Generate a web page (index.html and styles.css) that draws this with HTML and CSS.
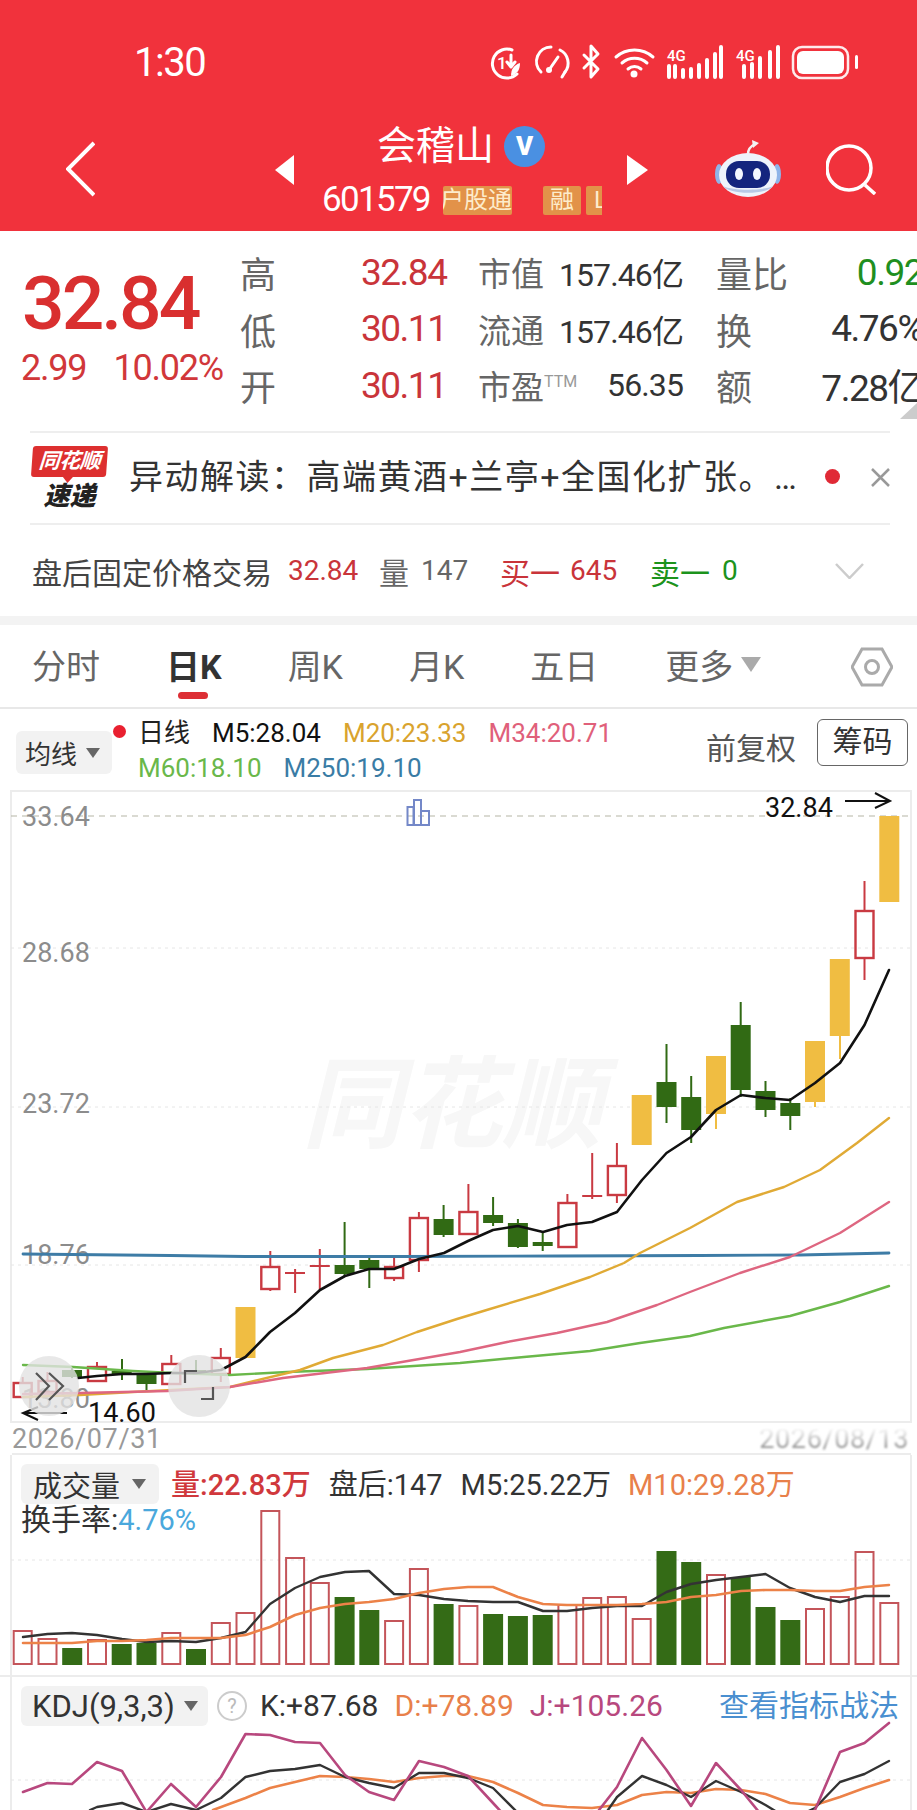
FILE: index.html
```html
<!DOCTYPE html>
<html lang="zh">
<head>
<meta charset="utf-8">
<title>会稽山</title>
<link rel="stylesheet" href="styles.css">
</head>
<body>
<div class="page">
  <header class="header">
    <div class="status">
      <span class="time">1:30</span>
      <svg class="status-icons" viewBox="490 44 370 36" width="370" height="36">
        <g class="si">
          <path d="M512 50a14.500 14.500 0 1 0 5 24"/>
          <path d="M511 76c0-7 3-11 9-13 0 7-3 11-9 13z" class="sif"/>
          <text x="497" y="69" class="si-t">1</text><path d="M511 55v11M507 62l4 5 4-5"/>
          <path d="M541 72a14.500 14.500 0 0 1 10-25M560 50a14.500 14.500 0 0 1 5 22"/>
          <path d="M549 70l9-13"/><circle cx="549" cy="70" r="3" class="sif"/><path d="M565 72l-3 5"/>
          <path d="M584 55l14 14-7 8V46l7 8-14 14" stroke-width="3"/>
          <path d="M616 57a28 28 0 0 1 37 0M622 63a19 19 0 0 1 25 0M628 69a10 10 0 0 1 13 0" stroke-width="3.500"/>
          <circle cx="634" cy="74" r="3.500" class="sif"/>
        </g>
        <text x="667" y="61" class="si-4g">4G</text>
        <g class="si-bars">
          <path d="M669 66v11M675 66v11M683 70v7M691 69v8M699 65v12M707 60v17M715 54v23M721 47v30"/>
        </g>
        <text x="736" y="61" class="si-4g">4G</text>
        <g class="si-bars">
          <path d="M744 66v11M752 64v13M760 58v19M770 52v25M778 47v30" stroke-width="4.500"/>
        </g>
        <rect x="793" y="47" width="55" height="31" rx="9" class="bat-o"/>
        <rect x="797" y="51" width="47" height="23" rx="6" class="bat-i"/>
        <rect x="855" y="55" width="3" height="14" rx="1.500" class="bat-i"/>
      </svg>
    </div>
    <nav class="nav">
      <svg class="back" viewBox="0 0 29 56" width="29" height="56"><path d="M28 2 2 28l26 26"/></svg>
      <span class="tri tri-l"></span>
      <div class="ident">
        <div class="ident-name">
          <span class="name">会稽山</span>
          <span class="vbadge">V</span>
        </div>
        <div class="ident-code">
          <span class="code">601579</span>
          <span class="tag tag-a"><span>户股通</span></span>
          <span class="tag tag-b">融</span>
          <span class="tag tag-c">L</span>
        </div>
      </div>
      <span class="tri tri-r"></span>
      <svg class="robot" viewBox="0 0 66 58" width="66" height="58">
        <path d="M33 14c0-5 3-8 7-10" class="ant"/><path d="M37 0l7 3-6 5z" fill="#f3f3f3"/>
        <ellipse cx="4" cy="34" rx="4" ry="10" fill="#8fb4e8"/><ellipse cx="62" cy="34" rx="4" ry="10" fill="#8fb4e8"/>
        <ellipse cx="33" cy="35" rx="29" ry="22" fill="#eef3fb"/>
        <path d="M8 46c6 9 44 9 50 0-10 5-40 5-50 0z" fill="#b8c9e6"/>
        <rect x="11" y="21" width="44" height="27" rx="13" fill="#14257e"/>
        <ellipse cx="24" cy="34" rx="4" ry="6" fill="#f4f7ff"/><ellipse cx="42" cy="34" rx="4" ry="6" fill="#f4f7ff"/>
      </svg>
      <svg class="search" viewBox="0 0 50 51" width="50" height="51"><circle cx="23" cy="24" r="22"/><path d="M39 41l10 9"/></svg>
    </nav>
  </header>

  <section class="quote">
    <div class="price-box">
      <div class="price">32.84</div>
      <div class="change"><span>2.99</span><span>10.02%</span></div>
    </div>
    <div class="stats">
      <span class="lab lab-big">高</span><span class="red">32.84</span>
      <span class="pair"><span class="lab">市值</span><span class="val">157.46亿</span></span>
      <span class="lab lab-big">量比</span><span class="val end grn">0.92</span>

      <span class="lab lab-big">低</span><span class="red">30.11</span>
      <span class="pair"><span class="lab">流通</span><span class="val">157.46亿</span></span>
      <span class="lab lab-big">换</span><span class="val end">4.76%</span>

      <span class="lab lab-big">开</span><span class="red">30.11</span>
      <span class="pair"><span class="lab">市盈<sup class="ttm">TTM</sup></span><span class="val">56.35</span></span>
      <span class="lab lab-big">额</span><span class="val end">7.28亿</span>
    </div>
    <span class="corner"></span>
  </section>

  <section class="promo">
    <div class="logo">
      <span class="logo-top">同花顺</span>
      <span class="logo-bot">速递</span>
    </div>
    <p class="promo-text">异动解读：高端黄酒+兰亭+全国化扩张。…</p>
    <span class="promo-dot"></span>
    <svg class="close" viewBox="0 0 19 19" width="19" height="19"><path d="M1 1l17 17M18 1 1 18"/></svg>
  </section>

  <section class="after">
    <span class="after-t">盘后固定价格交易</span>
    <span class="a-num a-red a1">32.84</span>
    <span class="a-gray a2">量</span>
    <span class="a-num a-gray a3">147</span>
    <span class="a-red a4">买一</span>
    <span class="a-num a-red a5">645</span>
    <span class="a-grn a6">卖一</span>
    <span class="a-num a-grn a7">0</span>
    <svg class="chev" viewBox="0 0 29 16" width="29" height="16"><path d="M1 1l13.500 14L28 1"/></svg>
  </section>

  <div class="band"></div>

  <section class="tabs">
    <span class="tab">分时</span>
    <span class="tab active">日K</span>
    <span class="tab">周K</span>
    <span class="tab">月K</span>
    <span class="tab">五日</span>
    <span class="tab tab-more">更多<i class="tab-tri"></i></span>
    <svg class="hex" viewBox="0 0 42 40" width="42" height="40"><path d="M11 2h20l10 18-10 18H11L1 20z"/><circle cx="21" cy="20" r="6.500"/></svg>
  </section>

  <section class="ma">
    <div class="chip chip-ma">均线<i class="chip-tri"></i></div>
    <span class="ma-dot"></span>
    <div class="ma-lines">
      <div class="ma-line"><span>日线</span><span class="m5">M5:28.04</span><span class="m20">M20:23.33</span><span class="m34">M34:20.71</span></div>
      <div class="ma-line"><span class="m60">M60:18.10</span><span class="m250">M250:19.10</span></div>
    </div>
    <span class="fq">前复权</span>
    <span class="chou">筹码</span>
  </section>

  <section class="panel panel-main">
    <svg class="plot" viewBox="0 790 917 633" width="917" height="633">
      <text x="302" y="1140" class="wm" textLength="300" lengthAdjust="spacingAndGlyphs">同花顺</text>
      <path d="M11 816H911" class="grid-top"/>
      <path d="M11 948H911M11 1107H911M11 1265H911" class="grid"/>
      <text x="22" y="826" class="ax">33.64</text>
      <text x="22" y="962" class="ax">28.68</text>
      <text x="22" y="1113" class="ax">23.72</text>
      <text x="22" y="1264" class="ax">18.76</text>
      <text x="22" y="1408" class="ax">13.80</text>

      <g class="c-y">
        <rect x="235.500" y="1307" width="20" height="51"/>
        <rect x="631.700" y="1095" width="20" height="50"/>
        <path d="M716 1114v15M815 1102v5M840 1036v23" class="w-y"/>
        <rect x="706" y="1056" width="20" height="58"/>
        <rect x="805" y="1041" width="20" height="61"/>
        <rect x="829.800" y="959" width="20" height="77"/>
        <rect x="879.300" y="816" width="20" height="86"/>
      </g>

      <g class="c-g">
        <path d="M72 1366v12M122 1359v21M146.500 1374v16M196 1360v12M344.600 1222v55M369.300 1257v31M443.600 1205v32M493.100 1197v29M517.900 1219v29M542.700 1232v19M666.500 1044v79M691.200 1076v67M740.700 1002v95M765.500 1081v36M790.300 1098v32" class="w-g"/>
        <rect x="62" y="1370" width="20" height="7"/>
        <rect x="111.700" y="1371" width="20" height="3"/>
        <rect x="136.500" y="1374" width="20" height="10"/>
        <rect x="186" y="1370" width="20" height="2"/>
        <rect x="334.600" y="1265" width="20" height="9"/>
        <rect x="359.300" y="1260" width="20" height="9"/>
        <rect x="433.600" y="1219" width="20" height="16"/>
        <rect x="483.100" y="1215" width="20" height="8"/>
        <rect x="507.900" y="1223" width="20" height="24"/>
        <rect x="532.700" y="1242" width="20" height="4"/>
        <rect x="656.500" y="1082" width="20" height="25"/>
        <rect x="681.200" y="1097" width="20" height="33"/>
        <rect x="730.700" y="1025" width="20" height="65"/>
        <rect x="755.500" y="1091" width="20" height="19"/>
        <rect x="780.300" y="1103" width="20" height="13"/>
      </g>

      <g class="c-r">
        <path d="M22.700 1377v6M47.500 1372v9M97 1362v5M171.300 1355v9M220.800 1348v10M220.800 1374v8M270.300 1251v16M270.300 1289v2M295.100 1269v24M319.800 1249v42M394.100 1256v11M394.100 1278v3M418.900 1212v6M418.900 1260v12M468.400 1184v28M567.400 1194v9M592.200 1153v46M616.900 1143v23M616.900 1195v8M864.500 881v30M864.500 958v22"/>
        <path d="M285 1273h20M309.800 1266h20M582.200 1196h20"/>
        <rect x="13.700" y="1383" width="18" height="14"/>
        <rect x="38.500" y="1381" width="18" height="11"/>
        <rect x="88" y="1367" width="18" height="14"/>
        <rect x="162.300" y="1364" width="18" height="20"/>
        <rect x="211.800" y="1358" width="18" height="16"/>
        <rect x="261.300" y="1267" width="18" height="22"/>
        <rect x="385.100" y="1267" width="18" height="11"/>
        <rect x="409.900" y="1218" width="18" height="42"/>
        <rect x="459.400" y="1212" width="18" height="22"/>
        <rect x="558.400" y="1203" width="18" height="44"/>
        <rect x="607.900" y="1166" width="18" height="29"/>
        <rect x="855.500" y="911" width="18" height="47"/>
      </g>

      <polyline class="l l-b" points="23,1254 170,1255.500 245,1256.500 400,1256.500 560,1256 700,1255.500 800,1255 889,1253"/>
      <polyline class="l l-gr" points="23,1365 73,1367 133,1371 173,1373 230,1375 287,1372 367,1369 460,1363 524,1357 590,1351 640,1343 690,1336 724,1328 790,1316 840,1302 889,1286"/>
      <polyline class="l l-y" points="23,1397 80,1395 133,1392 230,1387 246,1383 300,1370 333,1358 383,1345 417,1332 457,1319 490,1309 540,1294 590,1277 624,1263 640,1253 690,1228 737,1202 784,1187 820,1170 857,1143 889,1118"/>
      <polyline class="l l-p" points="23,1394 80,1393 167,1391 230,1387 283,1378 367,1368 460,1352 507,1342 557,1333 607,1322 657,1305 690,1292 740,1273 790,1257 840,1233 889,1202"/>
      <polyline class="l l-k" points="78,1378 97,1376 122,1374 147,1374 171,1373 196,1373 221,1370 245.500,1357 270,1332 295,1313 320,1290 345,1276 369,1269 394,1269 419,1259 444,1253 468,1241 493,1230 518,1226 543,1232 567,1225 592,1222 617,1212 642,1180 666.500,1153 691,1137 716,1110 741,1095 765.500,1098 790,1100 815,1083 840,1063 864.500,1025 889,970"/>

      <path d="M407.500 807h6v18h-6zM414 800h7v25h-7zM421 811h8v14h-8z" class="bar-icon"/>
      <text x="765" y="817" class="pr">32.84</text>
      <path d="M845 801h45M875 793l15 8-15 7" class="arrow"/>
      <text x="88" y="1422" class="pr">14.60</text>
      <path d="M23 1413h44M38 1407l-15 6 15 7" class="arrow"/>

      <circle cx="49" cy="1386" r="30" class="fab"/>
      <path d="M36 1373l13 13-13 14M49 1373l14 13-14 14" class="fab-i"/>
      <circle cx="199" cy="1386" r="31" class="fab"/>
      <path d="M185 1383v-12h12M213 1387v12h-12" class="fab-i"/>
    </svg>
  </section>

  <div class="dates">
    <span>2026/07/31</span>
    <span class="date-blur">2026/08/13</span>
  </div>

  <section class="panel panel-vol">
    <div class="row-vol">
      <div class="chip chip-vol">成交量<i class="chip-tri"></i></div>
      <span class="v-red">量:22.83万</span>
      <span class="v-dark">盘后:147</span>
      <span class="v-dark">M5:25.22万</span>
      <span class="v-org">M10:29.28万</span>
    </div>
    <div class="row-rate">换手率:<span class="v-blue">4.76%</span></div>
    <svg class="plot" viewBox="0 1535 917 140" width="917" height="140">
      <path d="M11 1560H911" class="grid"/>
      <g class="vb-r">
        <rect x="13.700" y="1631" width="18" height="33"/>
        <rect x="38.500" y="1639" width="18" height="25"/>
        <rect x="88" y="1640" width="18" height="24"/>
        <rect x="162.300" y="1633" width="18" height="31"/>
        <rect x="211.800" y="1623" width="18" height="41"/>
        <rect x="236.500" y="1613" width="18" height="51"/>
        <rect x="261.300" y="1511" width="18" height="153"/>
        <rect x="286.100" y="1558" width="18" height="106"/>
        <rect x="310.800" y="1583" width="18" height="81"/>
        <rect x="385.100" y="1621" width="18" height="43"/>
        <rect x="409.900" y="1569" width="18" height="95"/>
        <rect x="459.400" y="1606" width="18" height="58"/>
        <rect x="558.400" y="1605" width="18" height="59"/>
        <rect x="583.200" y="1598" width="18" height="66"/>
        <rect x="607.900" y="1597" width="18" height="67"/>
        <rect x="632.700" y="1619" width="18" height="45"/>
        <rect x="707" y="1575" width="18" height="89"/>
        <rect x="806" y="1609" width="18" height="55"/>
        <rect x="830.800" y="1597" width="18" height="67"/>
        <rect x="855.500" y="1552" width="18" height="112"/>
        <rect x="880.300" y="1603" width="18" height="61"/>
      </g>
      <g class="vb-g">
        <rect x="62.200" y="1648" width="20" height="17"/>
        <rect x="111.700" y="1644" width="20" height="21"/>
        <rect x="136.500" y="1643" width="20" height="22"/>
        <rect x="186" y="1649" width="20" height="16"/>
        <rect x="334.600" y="1597" width="20" height="68"/>
        <rect x="359.300" y="1610" width="20" height="55"/>
        <rect x="433.600" y="1604" width="20" height="61"/>
        <rect x="483.100" y="1614" width="20" height="51"/>
        <rect x="507.900" y="1616" width="20" height="49"/>
        <rect x="532.700" y="1615" width="20" height="50"/>
        <rect x="656.500" y="1551" width="20" height="114"/>
        <rect x="681.200" y="1562" width="20" height="103"/>
        <rect x="730.700" y="1577" width="20" height="88"/>
        <rect x="755.500" y="1607" width="20" height="58"/>
        <rect x="780.300" y="1620" width="20" height="45"/>
      </g>
      <polyline class="l l-dk" points="23,1637 47.500,1634 72,1633 97,1635 122,1639 146.500,1642 171,1641 196,1642 221,1638 245.500,1632 270,1604 295,1588 320,1577 345,1572 369,1571 394,1594 419,1595 444,1599 468,1601 493,1602 518,1602 543,1611 567,1611 592,1608 617,1606 642,1606 666.500,1592 691,1584 716,1580 741,1577 765.500,1574 790,1588 815,1597 840,1602 864.500,1596 889,1596"/>
      <polyline class="l l-o" points="23,1643 47.500,1643 72,1643 97,1641 122,1641 146.500,1640 171,1638 196,1638 221,1638 245.500,1635 270,1627 295,1615 320,1608 345,1604 369,1602 394,1599 419,1593 444,1589 468,1587 493,1587 518,1597 543,1604 567,1605 592,1605 617,1605 642,1604 666.500,1602 691,1597 716,1595 741,1591 765.500,1590 790,1590 815,1591 840,1591 864.500,1587 889,1585"/>
    </svg>
  </section>

  <div class="band-thin"></div>

  <section class="panel panel-kdj">
    <div class="row-kdj">
      <div class="chip chip-kdj">KDJ(9,3,3)<i class="chip-tri"></i></div>
      <span class="help">?</span>
      <span class="v-dark">K:+87.68</span>
      <span class="v-org">D:+78.89</span>
      <span class="v-mag">J:+105.26</span>
      <span class="kdj-link">查看指标战法</span>
    </div>
    <svg class="plot" viewBox="0 1730 917 80" width="917" height="80">
      <path d="M11 1780H911" class="grid"/>
      <polyline class="l l-o" points="213,1810 245.500,1798 270,1788 295,1782 320,1776 345,1777 369,1779 394,1782 419,1778 444,1776 468,1776 493,1782 518,1793 543,1805 567,1807 592,1808 617,1805 642,1795 666.500,1792 691,1793 716,1789 741,1790 765.500,1794 790,1803 815,1805 840,1797 864.500,1788 889,1780"/>
      <polyline class="l l-dk" points="73,1840 90,1810 97,1807 122,1803 146.500,1812 171,1804 196,1810 221,1798 245.500,1777 270,1771 295,1769 320,1765 345,1777 369,1783 394,1788 419,1773 444,1773 468,1778 493,1788 518,1813 543,1830 592,1833 617,1797 642,1776 666.500,1785 691,1797 716,1781 741,1792 765.500,1805 790,1820 815,1808 840,1782 864.500,1774 889,1761"/>
      <polyline class="l l-m" points="23,1792 47.500,1783 72,1784 97,1762 122,1771 146.500,1812 171,1784 196,1807 221,1777 245.500,1734 270,1735 295,1742 320,1743 345,1775 369,1792 394,1800 419,1761 444,1767 468,1776 493,1803 518,1830 543,1840 592,1840 599,1810 617,1787 642,1738 666.500,1770 691,1806 716,1763 741,1790 765.500,1820 790,1830 815,1810 840,1752 864.500,1743 889,1723"/>
    </svg>
  </section>
</div>
</body>
</html>
```

FILE: styles.css
```css
* { box-sizing: border-box; }
html, body { margin: 0; padding: 0; background: #fff; }
body { font-family: Roboto, "Noto Sans CJK SC", sans-serif; color: #333; }
.page { width: 917px; height: 1810px; overflow: hidden; position: relative; }

/* header */
.header { height: 231px; background: #f1323c; color: #fff; }
.status { height: 100px; position: relative; padding: 26px 0 0 134px; display: flex; }
.time { font-size: 40px; line-height: 74px; letter-spacing: -1.500px; font-weight: 400; }
.status-icons { position: absolute; left: 490px; top: 44px; }
.si path, .si circle { fill: none; stroke: #fff; stroke-width: 3px; stroke-linecap: round; stroke-linejoin: round; }
.si .sif { fill: #fff; stroke: none; }
.si-t { font-size: 17px; fill: #fff; font-weight: 500; }
.si-4g { font-size: 15px; fill: #fff; font-weight: 500; }
.si-bars path { fill: none; stroke: #fff; stroke-width: 4px; stroke-linecap: round; }
.bat-o { fill: none; stroke: #fff; stroke-width: 2.500px; opacity: .9; }
.bat-i { fill: #fff; }

.nav { height: 131px; display: flex; align-items: flex-start; }
.back { margin: 41px 0 0 66px; }
.back path { fill: none; stroke: #fff; stroke-width: 4px; }
.tri { width: 0; height: 0; border-top: 15px solid transparent; border-bottom: 15px solid transparent; margin-top: 55px; }
.tri-l { margin-left: 180px; border-right: 19px solid #fff; }
.tri-r { border-left: 21px solid #fff; }
.ident { width: 333px; flex: none; }
.ident-name { display: flex; align-items: center; height: 44px; margin-top: 24px; padding-left: 83px; }
.name { font-size: 39px; line-height: 44px; }
.vbadge { width: 41px; height: 41px; margin-left: 10px; border-radius: 50%; background: #4a90e2; color: #fff; font-size: 26px; font-weight: 900; display: flex; align-items: center; justify-content: center; }
.ident-code { display: flex; align-items: center; margin-top: 17px; padding-left: 28px; width: 308px; overflow: hidden; height: 30px; }
.code { font-size: 35px; line-height: 30px; width: 121px; flex: none; letter-spacing: -1.700px; }
.tag { height: 29px; background: #e29249; color: #fdeccc; font-size: 24px; line-height: 29px; border-radius: 2px; flex: none; overflow: hidden; }
.tag-a { width: 69px; }
.tag-a span { display: block; white-space: nowrap; margin-left: -3px; }
.tag-b { width: 38px; margin-left: 31px; text-align: center; }
.tag-c { width: 24px; margin-left: 5px; padding-left: 8px; }
.robot { margin: 40px 0 0 67px; }
.ant { fill: none; stroke: #f3f3f3; stroke-width: 2.500px; }
.search { margin: 44px 0 0 45px; }
.search circle, .search path { fill: none; stroke: #fff; stroke-width: 3.500px; }

/* quote */
.quote { height: 200px; position: relative; display: flex; overflow: hidden; }
.price-box { width: 240px; flex: none; padding: 39px 0 0 21px; }
.price { font-size: 75px; line-height: 66px; font-weight: 500; color: #d92f2f; margin-left: 1px; letter-spacing: -3px; }
.change { display: flex; gap: 27px; font-size: 36px; line-height: 40px; color: #d1373a; margin-top: 12px; letter-spacing: -1.200px; }
.stats { display: grid; grid-template-columns: 121px 117px 238px 60px 147px; grid-template-rows: repeat(3, 56.500px); padding-top: 13px; align-items: center; flex: none; width: 700px; }
.lab { font-size: 33px; color: #666; white-space: nowrap; }
.lab-big { font-size: 36px; }
.red { font-size: 37px; color: #c9343a; letter-spacing: -1.500px; }
.pair { display: flex; justify-content: space-between; align-items: center; padding-right: 33px; }
.val { font-size: 32px; color: #333; white-space: nowrap; letter-spacing: -.9px; }
.val.end { font-size: 37px; text-align: right; letter-spacing: -1.500px; }
.grn { color: #1f8f1f; }
.val.grn { color: #1f8f1f; }
.ttm { font-size: 16px; line-height: 0; vertical-align: 12px; color: #999; }
.corner { position: absolute; right: 0; bottom: 12px; width: 0; height: 0; border-left: 17px solid transparent; border-bottom: 16px solid #ccc; }

/* promo */
.promo { height: 92px; margin: 0 27px 0 30px; border-top: 2px solid #eee; display: flex; align-items: flex-start; position: relative; }
.logo { width: 75px; margin: 13px 0 0 2px; display: flex; flex-direction: column; align-items: center; flex: none; }
.logo-top { width: 75px; height: 31px; background: #dd2f2f; color: #fff; font-size: 21px; line-height: 31px; font-style: italic; font-weight: 700; text-align: center; border-radius: 3px; letter-spacing: -.5px; transform: skewX(-4deg); position: relative; }
.logo-top::after { content: ""; position: absolute; left: 32px; bottom: -6px; border-left: 5px solid transparent; border-right: 5px solid transparent; border-top: 6px solid #dd2f2f; }
.logo-bot { font-size: 26px; line-height: 28px; margin-top: 5px; font-weight: 900; font-style: italic; color: #222; }
.promo-text { margin: 21px 0 0 22px; font-size: 34px; line-height: 46px; color: #333; white-space: nowrap; width: 684px; flex: none; letter-spacing: 1.500px; }
.promo-dot { width: 15px; height: 15px; border-radius: 50%; background: #e02a36; flex: none; margin: 36px 0 0 12px; }
.close { margin: 35px 0 0 31px; flex: none; }
.close path { fill: none; stroke: #999; stroke-width: 2.500px; }

/* after hours */
.after { height: 93px; margin-left: 30px; margin-right: 27px; border-top: 2px solid #eee; display: flex; align-items: center; font-size: 30px; padding-left: 2px; position: relative; }
.after-t { color: #444; width: 256px; flex: none; }
.a-num { font-size: 28px; }
.a-red { color: #c9343a; }
.a-gray { color: #666; }
.a-grn { color: #1c931c; }
.a1 { width: 91px; flex: none; }
.a2 { width: 42px; flex: none; }
.a3 { width: 79px; flex: none; }
.a4 { width: 70px; flex: none; }
.a5 { width: 80px; flex: none; }
.a6 { width: 72px; flex: none; }
.a7 { width: 113px; flex: none; }
.chev path { fill: none; stroke: #ccc; stroke-width: 2.500px; }

.band { height: 9px; background: #f3f3f3; }

/* tabs */
.tabs { height: 84px; border-bottom: 2px solid #e8e8e8; padding-left: 32px; display: flex; gap: 66px; align-items: center; padding-bottom: 3px; position: relative; }
.tab { font-size: 34px; color: #666; position: relative; white-space: nowrap; }
.tab.active { color: #333; font-weight: 700; }
.tab.active::after { content: ""; position: absolute; left: 12px; top: 52px; width: 30px; height: 7px; background: #dd2f35; border-radius: 4px; }
.tab-more { display: flex; align-items: center; margin-left: 1px; }
.tab-tri { width: 0; height: 0; margin-left: 8px; border-left: 10px solid transparent; border-right: 10px solid transparent; border-top: 15px solid #aaa; }
.hex { position: absolute; left: 851px; top: 22px; }
.hex path, .hex circle { fill: none; stroke: #aaa; stroke-width: 3px; }

/* moving averages */
.ma { height: 81px; display: flex; align-items: flex-start; }
.chip { background: #f2f2f2; border-radius: 6px; color: #333; display: flex; align-items: center; }
.chip-tri { width: 0; height: 0; border-left: 7.500px solid transparent; border-right: 7.500px solid transparent; border-top: 10px solid #666; }
.chip-ma { width: 96px; height: 43px; margin: 22px 0 0 16px; padding-left: 9px; font-size: 26px; gap: 9px; flex: none; }
.ma-dot { width: 13px; height: 13px; border-radius: 50%; background: #e92030; margin: 16px 0 0 1px; flex: none; }
.ma-lines { width: 568px; flex: none; margin: 7px 0 0 12px; }
.ma-line { display: flex; gap: 22px; font-size: 26px; line-height: 35px; color: #222; white-space: nowrap; }
.m5 { color: #111; }
.m20 { color: #d9a32e; }
.m34 { color: #e0607a; }
.m60 { color: #6ab84a; }
.m250 { color: #3a7ca5; }
.fq { font-size: 30px; color: #555; margin-top: 15px; width: 111px; flex: none; }
.chou { width: 91px; height: 47px; border: 1.500px solid #666; border-radius: 6px; font-size: 30px; line-height: 43px; text-align: center; color: #333; margin-top: 10px; flex: none; }

/* panels */
.panel { margin-left: 10px; width: 902px; border: solid #ececec; border-width: 0 2px; position: relative; }
.panel .plot { display: block; margin-left: -12px; overflow: visible; }
.panel-main { border-width: 2px; height: 633px; }
.panel-main .plot { margin-top: -2px; }
.dates { height: 32px; margin-left: 12px; width: 899px; border-bottom: 2px solid #ececec; display: flex; justify-content: space-between; font-size: 27px; line-height: 33px; color: #999; letter-spacing: .6px; }
.date-blur { filter: blur(1.200px); -webkit-mask-image: linear-gradient(to bottom, transparent 15%, #000 80%); mask-image: linear-gradient(to bottom, transparent 15%, #000 80%); margin-right: 2px; }
.panel-vol { height: 220px; }
.row-vol { height: 50px; display: flex; align-items: flex-start; font-size: 29px; white-space: nowrap; }
.chip-vol { width: 138px; height: 40px; margin: 9px 0 0 9px; padding-left: 12px; font-size: 29px; gap: 12px; flex: none; }
.row-vol span { margin-top: 12px; line-height: 36px; }
.v-red { color: #d0383c; margin-left: 12px; font-weight: 500; }
.row-vol .v-dark { margin-left: 18px; }
.row-vol .v-org { margin-left: 17px; }
.v-dark { color: #333; }
.v-org { color: #e8804a; }
.v-blue { color: #4aa8dc; font-size: 29px; }
.v-mag { color: #b8487e; }
.row-rate { height: 30px; padding-left: 9px; font-size: 30px; line-height: 30px; color: #333; white-space: nowrap; }
.band-thin { height: 2px; background: #ececec; }
.panel-kdj { height: 133px; }
.row-kdj { height: 53px; display: flex; align-items: flex-start; font-size: 30px; white-space: nowrap; position: relative; }
.row-kdj > span { margin-top: 11px; line-height: 36px; }
.chip-kdj { width: 187px; height: 40px; margin: 9px 0 0 9px; padding-left: 11px; font-size: 31px; gap: 9px; flex: none; }
.row-kdj .help { width: 30px; height: 30px; line-height: 26px; margin: 14px 0 0 9px; border: 2.500px solid #ccc; border-radius: 50%; text-align: center; color: #bbb; font-size: 20px; flex: none; }
.row-kdj .v-dark { margin-left: 13px; }
.row-kdj .v-org { margin-left: 16px; }
.row-kdj .v-mag { margin-left: 16px; }
.row-kdj .kdj-link { position: absolute; left: 707px; font-size: 30px; color: #4a8fd0; }

/* chart marks */
.grid { fill: none; stroke: #e6e6e6; stroke-width: 1px; stroke-dasharray: 3 4; }
.grid-top { fill: none; stroke: #b5b5a5; stroke-width: 1px; stroke-dasharray: 6 5; }
.ax { font-size: 27px; fill: #8c8c8c; }
.pr { font-size: 27px; fill: #111; }
.wm { font-size: 100px; font-style: italic; font-weight: 700; fill: #f7f7f7; }
.c-y rect { fill: #f0bd42; }
.w-y { fill: none; stroke: #f0bd42; stroke-width: 2px; }
.c-g rect { fill: #316a14; }
.w-g { fill: none; stroke: #316a14; stroke-width: 2px; }
.c-r rect, .c-r path { fill: none; stroke: #c93a42; stroke-width: 2px; }
.c-r rect { stroke-width: 2.400px; }
.vb-r rect { fill: none; stroke: #c4555a; stroke-width: 2px; }
.vb-g rect { fill: #346b16; }
.l { fill: none; stroke-width: 2.400px; stroke-linejoin: round; stroke-linecap: round; }
.l-b { stroke: #3e7ca6; stroke-width: 2.800px; }
.l-gr { stroke: #6ab84a; }
.l-y { stroke: #e0aa35; }
.l-p { stroke: #de6680; }
.l-k { stroke: #111; stroke-width: 2.600px; }
.l-dk { stroke: #333; }
.l-o { stroke: #ec8248; stroke-width: 2.600px; }
.l-m { stroke: #b8487e; stroke-width: 2.600px; }
.bar-icon { fill: none; stroke: #7488c8; stroke-width: 2px; }
.arrow { fill: none; stroke: #111; stroke-width: 2px; }
.fab { fill: #e2e2e2; opacity: .8; }
.fab-i { fill: none; stroke: #555; stroke-width: 2.200px; }
```
